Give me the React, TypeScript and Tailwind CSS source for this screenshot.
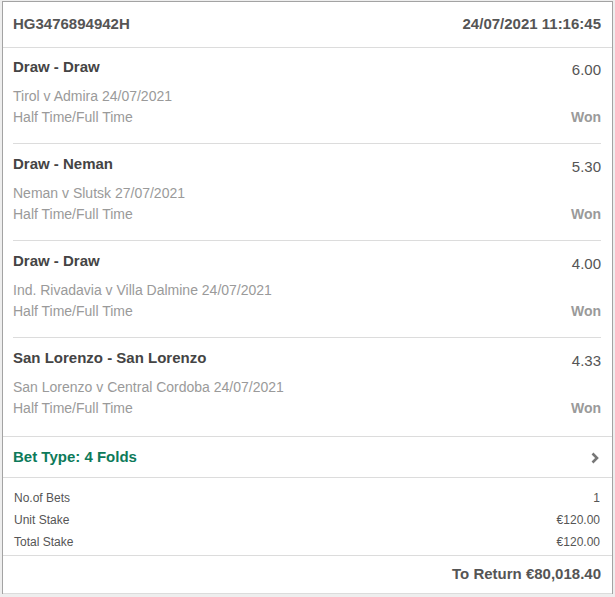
import React from 'react';

interface Selection {
  title: string;
  odds: string;
  event: string;
  market: string;
  result: string;
}

const selections: Selection[] = [
  { title: 'Draw - Draw', odds: '6.00', event: 'Tirol v Admira 24/07/2021', market: 'Half Time/Full Time', result: 'Won' },
  { title: 'Draw - Neman', odds: '5.30', event: 'Neman v Slutsk 27/07/2021', market: 'Half Time/Full Time', result: 'Won' },
  { title: 'Draw - Draw', odds: '4.00', event: 'Ind. Rivadavia v Villa Dalmine 24/07/2021', market: 'Half Time/Full Time', result: 'Won' },
  { title: 'San Lorenzo - San Lorenzo', odds: '4.33', event: 'San Lorenzo v Central Cordoba 24/07/2021', market: 'Half Time/Full Time', result: 'Won' },
];

const summary = [
  { label: 'No.of Bets', value: '1' },
  { label: 'Unit Stake', value: '€120.00' },
  { label: 'Total Stake', value: '€120.00' },
];

export default function App() {
  return (
    <div className="min-h-[597px] w-[615px] bg-[#eeeeee] pt-px pl-[2px] font-['Liberation_Sans']">
      <div className="w-[611px] border border-b-0 border-[#a3a3a3] bg-white">
        <div className="flex h-[46px] items-center justify-between border-b border-[#dcdcdc] pl-[10px] pr-[11px] text-[15px] font-bold text-[#555555]">
          <span>HG3476894942H</span>
          <span>24/07/2021 11:16:45</span>
        </div>

        {selections.map((s, i) => {
          const last = i === selections.length - 1;
          const box = last
            ? 'pt-[10px] h-[98px] pl-[10px] pr-[11px]'
            : i === 0
              ? 'pt-[9px] h-[96px] border-b border-[#dcdcdc]'
              : 'pt-[10px] h-[97px] border-b border-[#dcdcdc]';
          return (
            <div key={i} className={last ? 'px-0' : 'pl-[10px] pr-[11px]'}>
              <div className={box}>
                <div className="flex items-start justify-between">
                  <span className="text-[15px] leading-[20px] font-bold text-[#444444]">{s.title}</span>
                  <span className="mt-[3px] text-[15px] leading-[20px] text-[#555555]">{s.odds}</span>
                </div>
                <div className="mt-[6px] text-[14px] leading-[21px] text-[#9a9a9a]">{s.event}</div>
                <div className="flex items-center justify-between text-[14px] leading-[21px] text-[#9a9a9a]">
                  <span>{s.market}</span>
                  <span className="font-bold">{s.result}</span>
                </div>
              </div>
            </div>
          );
        })}

        <div className="flex h-[42px] items-center justify-between border-y border-[#dcdcdc] pl-[10px] pr-[13px]">
          <span className="text-[15px] font-bold text-[#0d7a5a]">Bet Type: 4 Folds</span>
          <svg width="8" height="12" viewBox="0 0 8 12" className="mt-[2px]">
            <polyline points="1.5,1.5 6,6 1.5,10.5" fill="none" stroke="#777777" strokeWidth="2.6" />
          </svg>
        </div>

        <div className="h-[78px] border-b border-[#dcdcdc] pt-[9px] pl-[11px] pr-[12px]">
          {summary.map(r => (
            <div key={r.label} className="flex h-[22px] items-center justify-between text-[12px] text-[#555555]">
              <span>{r.label}</span>
              <span>{r.value}</span>
            </div>
          ))}
        </div>

        <div className="flex h-[38px] items-center justify-end border-b border-[#dcdcdc] pr-[11px] text-[15px] font-bold text-[#555555]">
          To Return €80,018.40
        </div>
      </div>
    </div>
  );
}
